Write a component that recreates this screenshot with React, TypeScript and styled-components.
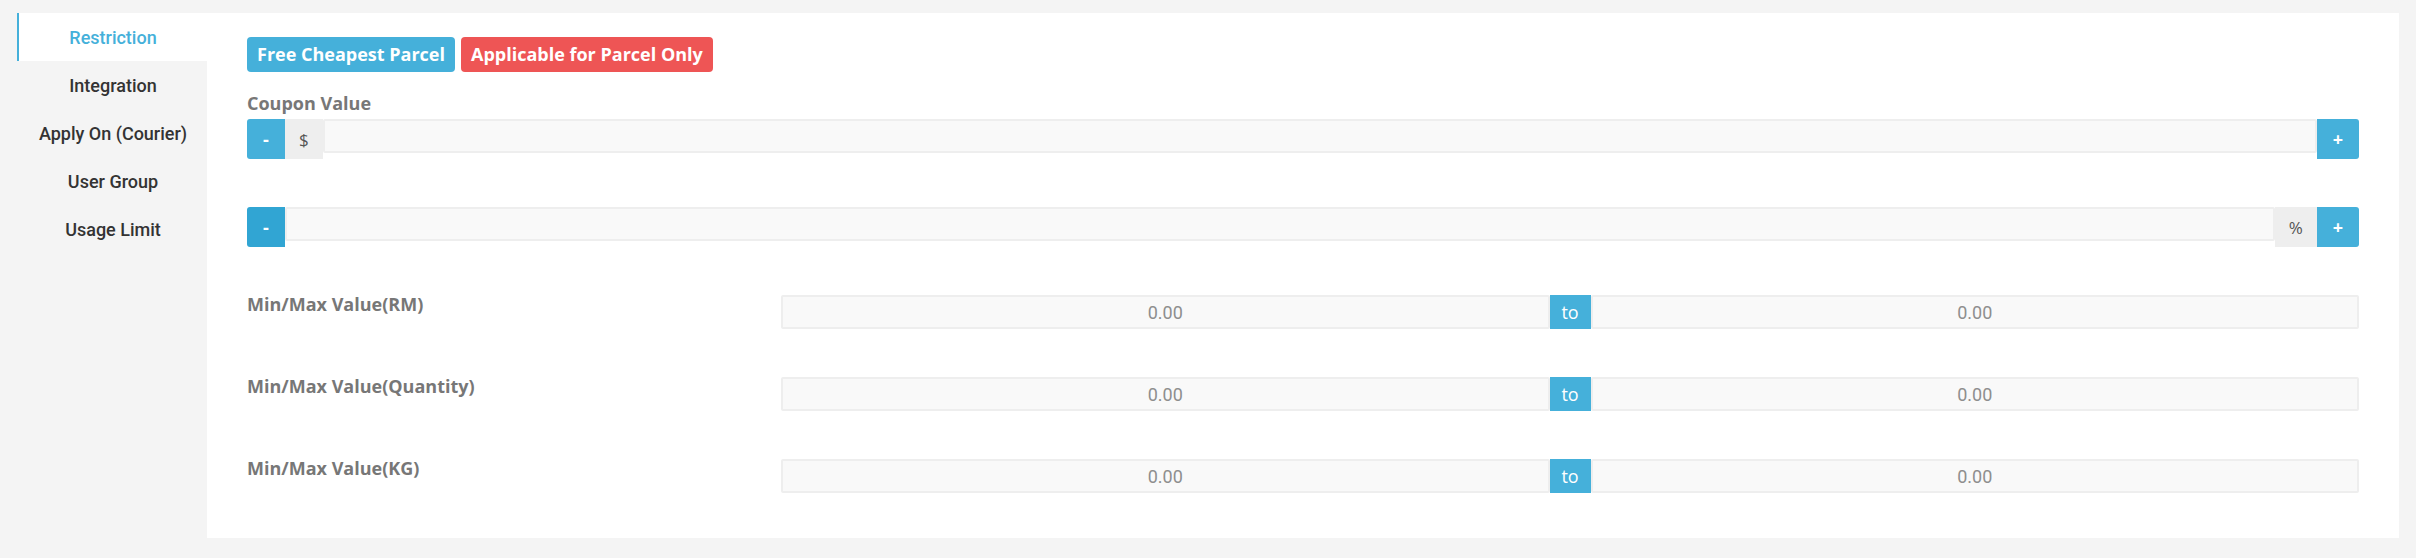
import React from "react";
import styled, { createGlobalStyle, css } from "styled-components";

const GlobalStyle = createGlobalStyle`
  html, body {
    margin: 0;
    padding: 0;
    background: #f4f4f4;
  }
  * { box-sizing: border-box; }
`;

const BLUE = "#45b0da";
const BLUE_DARK = "#31a5d3";
const RED = "#ee5555";

const Page = styled.div`
  display: flex;
  align-items: flex-start;
  padding: 13px 17px 14px;
  background: #f4f4f4;
`;

const Sidebar = styled.nav`
  width: 190px;
  flex-shrink: 0;
  display: flex;
  flex-direction: column;
`;

const Tab = styled.div<{ $active?: boolean }>`
  height: 48px;
  display: flex;
  align-items: center;
  justify-content: center;
  font-family: Roboto, "Helvetica Neue", Arial, sans-serif;
  font-weight: 500;
  font-size: 18px;
  color: #333;
  border-left: 2px solid transparent;
  ${(p) =>
    p.$active &&
    css`
      background: #fff;
      color: ${BLUE};
      border-left-color: ${BLUE};
    `}
`;

const Panel = styled.main`
  flex: 1;
  min-width: 0;
  background: #fff;
  padding: 24px 40px 45px;
  font-family: "Open Sans", Arial, sans-serif;
`;

const BadgeRow = styled.div`
  display: flex;
  gap: 6px;
`;

const Badge = styled.span<{ $tone: "blue" | "red" }>`
  display: inline-block;
  height: 35px;
  line-height: 35px;
  padding: 0 10px;
  border-radius: 4px;
  color: #fff;
  font-weight: 700;
  font-size: 18px;
  background: ${(p) => (p.$tone === "blue" ? BLUE : RED)};
`;

const FieldLabel = styled.div`
  margin: 22px 0 7px;
  font-size: 18px;
  line-height: 18px;
  font-weight: 700;
  color: #777;
`;

const InputGroup = styled.div<{ $spaced?: boolean }>`
  display: flex;
  align-items: flex-start;
  height: 40px;
  margin-top: ${(p) => (p.$spaced ? "48px" : "0")};
`;

const StepButton = styled.button<{ $side: "left" | "right"; $pressed?: boolean }>`
  height: 40px;
  padding: 0 16px;
  border: 0;
  margin: 0;
  color: #fff;
  font-family: "Open Sans", Arial, sans-serif;
  font-weight: 700;
  font-size: 18px;
  line-height: 40px;
  background: ${(p) => (p.$pressed ? BLUE_DARK : BLUE)};
  border-radius: ${(p) => (p.$side === "left" ? "3px 0 0 3px" : "0 3px 3px 0")};
  cursor: pointer;
`;

const Addon = styled.span<{ $w: number }>`
  width: ${(p) => p.$w}px;
  height: 40px;
  display: flex;
  align-items: center;
  justify-content: center;
  background: #eeeeee;
  color: #555;
  font-size: 17px;
  flex-shrink: 0;
`;

const TextInput = styled.input<{ $h?: number }>`
  flex: 1;
  min-width: 0;
  height: ${(p) => p.$h ?? 34}px;
  margin: 0;
  border: 2px solid #eeeeee;
  background: #f9f9f9;
  border-radius: 2px;
  outline: none;
  font-family: Roboto, "Helvetica Neue", Arial, sans-serif;
  font-size: 18px;
  color: #8e8e8e;
  text-align: center;
  padding: 0 8px;
`;

const RangeRow = styled.div`
  display: grid;
  grid-template-columns: 534px 1fr;
  margin-top: 48px;
`;

const RangeLabel = styled.div`
  font-size: 18px;
  line-height: 18px;
  font-weight: 700;
  color: #777;
`;

const RangeGroup = styled.div`
  display: flex;
  height: 34px;
`;

const ToAddon = styled.span`
  width: 41px;
  height: 34px;
  display: flex;
  align-items: center;
  justify-content: center;
  background: ${BLUE};
  color: #fff;
  font-size: 18px;
  flex-shrink: 0;
`;

const tabs = ["Restriction", "Integration", "Apply On (Courier)", "User Group", "Usage Limit"];
const ranges = ["Min/Max Value(RM)", "Min/Max Value(Quantity)", "Min/Max Value(KG)"];

export default function App() {
  return (
    <>
      <GlobalStyle />
      <Page>
        <Sidebar>
          {tabs.map((t, i) => (
            <Tab key={t} $active={i === 0}>
              {t}
            </Tab>
          ))}
        </Sidebar>
        <Panel>
          <BadgeRow>
            <Badge $tone="blue">Free Cheapest Parcel</Badge>
            <Badge $tone="red">Applicable for Parcel Only</Badge>
          </BadgeRow>
          <FieldLabel>Coupon Value</FieldLabel>
          <InputGroup>
            <StepButton $side="left">-</StepButton>
            <Addon $w={38}>$</Addon>
            <TextInput readOnly defaultValue="" />
            <StepButton $side="right">+</StepButton>
          </InputGroup>
          <InputGroup $spaced>
            <StepButton $side="left" $pressed>-</StepButton>
            <TextInput readOnly defaultValue="" />
            <Addon $w={42}>%</Addon>
            <StepButton $side="right">+</StepButton>
          </InputGroup>
          {ranges.map((r) => (
            <RangeRow key={r}>
              <RangeLabel>{r}</RangeLabel>
              <RangeGroup>
                <TextInput readOnly defaultValue="0.00" />
                <ToAddon>to</ToAddon>
                <TextInput readOnly defaultValue="0.00" />
              </RangeGroup>
            </RangeRow>
          ))}
        </Panel>
      </Page>
    </>
  );
}
